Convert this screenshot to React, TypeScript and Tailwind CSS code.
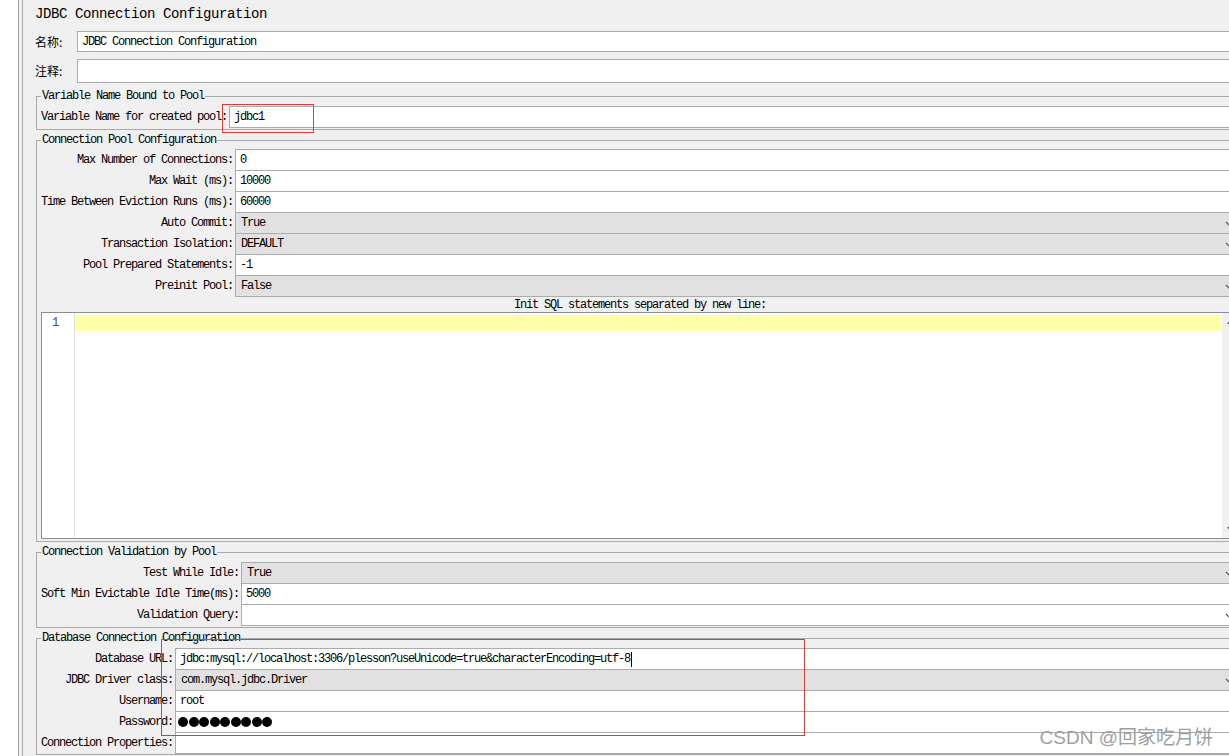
import React from 'react';

type Kind = 'text' | 'combo' | 'ecombo';

interface RowDef {
  label: string;
  value?: React.ReactNode;
  kind?: Kind;
}

const mono = "font-['Liberation_Mono',monospace] text-[12px] tracking-[-1.2px] text-black whitespace-nowrap";

function ComboArrow() {
  return (
    <svg className="ml-auto mr-[5px] shrink-0" width="8" height="5" viewBox="0 0 8 5">
      <polyline points="1,1 4,4 7,1" fill="none" stroke="#555" strokeWidth="1.2" />
    </svg>
  );
}

function Field({ kind = 'text', children, height = 'h-[22px]' }: { kind?: Kind; children?: React.ReactNode; height?: string }) {
  const bg = kind === 'combo' ? 'bg-[#e1e1e1] pl-[5px]' : 'bg-white pl-[4px]';
  return (
    <div className={`${height} flex-1 min-w-0 border border-[#ababab] flex items-center ${bg}`}>
      <span className={mono}>{children}</span>
      {kind !== 'text' && <ComboArrow />}
    </div>
  );
}

function Rows({ rows, labelW }: { rows: RowDef[]; labelW: string }) {
  return (
    <div className="flex flex-col">
      {rows.map((r, i) => (
        <div key={r.label} className={`flex items-center ${i > 0 ? '-mt-px' : ''}`}>
          <div className={`${labelW} shrink-0 text-right pr-[2px] ${mono}`}>{r.label}</div>
          <Field kind={r.kind}>{r.value}</Field>
        </div>
      ))}
    </div>
  );
}

function Group({ title, className = '', children }: { title: string; className?: string; children: React.ReactNode }) {
  return (
    <fieldset className={`ml-[13px] w-[1208px] min-w-0 border border-[#a9a9a9] px-[4px] ${className}`}>
      <legend className={`px-px leading-[12px] ${mono}`}>{title}</legend>
      {children}
    </fieldset>
  );
}

function Password() {
  return (
    <span className="flex gap-[0.5px] -ml-[2px]">
      {Array.from({ length: 9 }).map((_, i) => (
        <span key={i} className="inline-block w-[10px] h-[10px] rounded-full bg-black" />
      ))}
    </span>
  );
}

export default function App() {
  const poolRows: RowDef[] = [
    { label: 'Max Number of Connections:', value: '0' },
    { label: 'Max Wait (ms):', value: '10000' },
    { label: 'Time Between Eviction Runs (ms):', value: '60000' },
    { label: 'Auto Commit:', value: 'True', kind: 'combo' },
    { label: 'Transaction Isolation:', value: 'DEFAULT', kind: 'combo' },
    { label: 'Pool Prepared Statements:', value: '-1' },
    { label: 'Preinit Pool:', value: 'False', kind: 'combo' },
  ];

  const validationRows: RowDef[] = [
    { label: 'Test While Idle:', value: 'True', kind: 'combo' },
    { label: 'Soft Min Evictable Idle Time(ms):', value: '5000' },
    { label: 'Validation Query:', value: '', kind: 'ecombo' },
  ];

  const dbRows: RowDef[] = [
    {
      label: 'Database URL:',
      value: (
        <span className="inline-flex items-center">
          jdbc:mysql://localhost:3306/plesson?useUnicode=true&amp;characterEncoding=utf-8
          <span className="inline-block w-px h-[15px] bg-black ml-[1px]" />
        </span>
      ),
    },
    { label: 'JDBC Driver class:', value: 'com.mysql.jdbc.Driver', kind: 'combo' },
    { label: 'Username:', value: 'root' },
    { label: 'Password:', value: <Password /> },
    { label: 'Connection Properties:', value: '' },
  ];

  return (
    <div className="relative w-[1229px] h-[756px] overflow-hidden bg-white flex">
      <div className="w-[18px] shrink-0 bg-white" />
      <div className="w-px shrink-0 bg-[#a0a0a0]" />
      <div className="w-[3px] shrink-0 bg-[#f0f0f0]" />
      <div className="w-px shrink-0 bg-[#a8a8a8]" />

      <div className="w-[1250px] shrink-0 bg-[#f0f0f0] flex flex-col">
        <div className="h-[28px] flex items-center pl-[12px]">
          <span className="font-['Liberation_Mono',monospace] text-[14px] tracking-[-0.4px] text-black">
            JDBC Connection Configuration
          </span>
        </div>

        <div className="mt-[3px] flex items-center pl-[12px] w-[1216px]">
          <div className="w-[42px] shrink-0 font-['Noto_Sans_CJK_SC',sans-serif] text-[12px] text-black">名称:</div>
          <Field height="h-[21px]">JDBC Connection Configuration</Field>
        </div>

        <div className="mt-[7px] flex items-center pl-[12px] w-[1216px]">
          <div className="w-[42px] shrink-0 font-['Noto_Sans_CJK_SC',sans-serif] text-[12px] text-black">注释:</div>
          <Field height="h-[24px]" />
        </div>

        <Group title="Variable Name Bound to Pool" className="mt-[7px] pt-[4px] pb-[1px]">
          <Rows rows={[{ label: 'Variable Name for created pool:', value: 'jdbc1' }]} labelW="w-[188px]" />
        </Group>

        <Group title="Connection Pool Configuration" className="mt-[4px] pt-[3px] pb-[2px]">
          <Rows rows={poolRows} labelW="w-[194px]" />
          <div className={`h-[15px] flex items-center justify-center ${mono}`}>
            Init SQL statements separated by new line:
          </div>
          <div className="h-[227px] border border-[#8c8c8c] bg-white flex">
            <div className="w-[33px] shrink-0 border-r border-[#e3e3e3] pt-[2px]">
              <div className="h-[16px] flex items-center pl-[10px] font-['Liberation_Mono',monospace] text-[12px] text-[#2b4a9b]">
                1
              </div>
            </div>
            <div className="flex-1 pt-[2px]">
              <div className="h-[16px] bg-[#ffffaa]" />
            </div>
            <div className="w-[16px] shrink-0 ml-px bg-[#f0f0f0] flex flex-col items-center justify-between py-[6px]">
              <svg width="7" height="5" viewBox="0 0 7 5">
                <polygon points="0,5 3.5,0 7,5" fill="#606060" />
              </svg>
              <svg width="7" height="5" viewBox="0 0 7 5">
                <polygon points="0,0 3.5,5 7,0" fill="#606060" />
              </svg>
            </div>
          </div>
        </Group>

        <Group title="Connection Validation by Pool" className="mt-[4px] pt-[4px] pb-[1px]">
          <Rows rows={validationRows} labelW="w-[200px]" />
        </Group>

        <Group title="Database Connection Configuration" className="mt-[4px] pt-[4px] pb-0">
          <Rows rows={dbRows} labelW="w-[134px]" />
        </Group>
      </div>

      {/* annotation boxes */}
      <div className="absolute left-[222px] top-[104px] w-[92px] h-[29px] border border-[#e53935]" />
      <div className="absolute left-[161px] top-[639px] w-[644px] h-[97px] border border-[#e53935]" />

      <div className="absolute right-[16px] bottom-[7px] font-['Liberation_Sans','Noto_Sans_CJK_SC',sans-serif] text-[19px] leading-[22px] text-[#a0a0a0]">
        CSDN @回家吃月饼
      </div>
    </div>
  );
}
